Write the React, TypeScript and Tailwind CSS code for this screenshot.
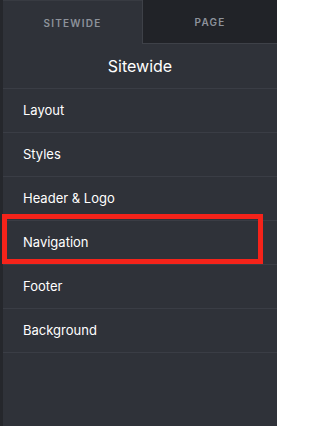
const items = ["Layout", "Styles", "Header & Logo", "Navigation", "Footer", "Background"];

export default function App() {
  return (
    <div
      className="flex h-[426px] w-[277px] bg-[#25272c] text-white"
      style={{ fontFamily: "Inter, 'Noto Sans', sans-serif" }}
    >
      <div className="w-[3px] shrink-0 bg-[#25272c]" />
      <div className="flex flex-1 flex-col bg-[#2f3239]">
        {/* Tabs */}
        <div className="flex h-[44px]">
          <div className="flex w-[139px] items-center justify-center border-t border-[#383b42] pt-[2px] text-[10px] font-semibold tracking-[0.12em] text-[#8d929b]">
            SITEWIDE
          </div>
          <div className="flex flex-1 items-center justify-center border-b border-l border-[#3e4148] bg-[#212328] pt-[2px] text-[10px] font-semibold tracking-[0.12em] text-[#8d929b]">
            PAGE
          </div>
        </div>

        <div className="flex h-[45px] items-center justify-center border-b border-[#3a3d45] text-[16px]">
          Sitewide
        </div>

        {items.map((item) => (
          <div key={item} className="relative flex h-[44px] items-center border-b border-[#3a3d45] pl-[20px] text-[13px]">
            {item}
            {item === "Navigation" && (
              <div className="absolute left-[-1px] top-[-7px] h-[50px] w-[261px] border-[5px] border-[#f5231a]" />
            )}
          </div>
        ))}
      </div>
    </div>
  );
}
